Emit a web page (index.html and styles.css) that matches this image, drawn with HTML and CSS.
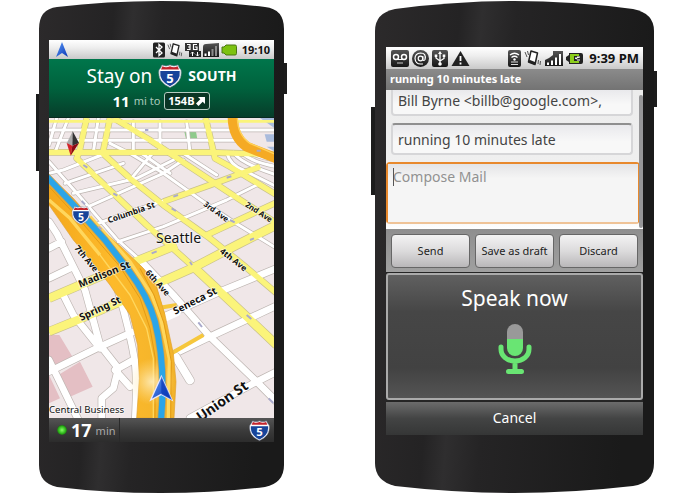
FILE: index.html
```html
<!DOCTYPE html>
<html lang="en">
<head>
<meta charset="utf-8">
<title>Navigation and voice input</title>
<link rel="stylesheet" href="styles.css">
</head>
<body>
<svg class="defs" aria-hidden="true">
  <defs>
    <linearGradient id="case" x1="0" y1="0" x2="1" y2="0.15">
      <stop offset="0" stop-color="#2c2a2b"/><stop offset="0.3" stop-color="#242324"/><stop offset="0.38" stop-color="#2f2e2f"/><stop offset="0.5" stop-color="#252425"/><stop offset="1" stop-color="#1a1a1a"/>
    </linearGradient>
    <linearGradient id="arrow" x1="0" y1="0" x2="1" y2="1">
      <stop offset="0" stop-color="#5b9bf8"/><stop offset="1" stop-color="#0a35b5"/>
    </linearGradient>
    <linearGradient id="dark" x1="0" y1="0" x2="0" y2="1">
      <stop offset="0" stop-color="#555"/><stop offset="1" stop-color="#161616"/>
    </linearGradient>
    <symbol id="shield" viewBox="0 0 24 24">
      <path d="M4 1Q8 3 12 1Q16 3 20 1Q21 4 23 6Q25 18 12 23.500Q-1 18 1 6Q3 4 4 1Z" fill="#fff" stroke="#7d86a0" stroke-width=".6"/>
      <path d="M4.500 2.300Q8 4 12 2.300Q16 4 19.500 2.300L21 5.500H3Z" fill="#c3242c"/>
      <path d="M2.300 7H21.700Q23 17 12 22.200Q1 17 2.300 7Z" fill="#17449a"/>
      <text x="12" y="18.500" text-anchor="middle" class="shield-text">5</text>
    </symbol>
    <symbol id="vibrate" viewBox="0 0 18 18">
      <path d="M7 2L13.500 4L11 15.500L4.500 13Z" fill="#fff" stroke="#222" stroke-width="1.500" stroke-linejoin="round"/>
      <path d="M5 12L11 14.500" stroke="#222" stroke-width="2.500"/>
      <path d="M1 3L3 8M3.500 2L4.500 6M14.500 11L14 15M16.500 12L16 16" stroke="#555" stroke-width="1" fill="none"/>
    </symbol>
  </defs>
</svg>

<main class="stage">
  <section class="phone phone-nav" aria-label="Navigation">
    <svg class="case" viewBox="0 0 251 492" preserveAspectRatio="none" aria-hidden="true">
      <path d="M0 93H4V170H0ZM247 62H251V93H247Z" fill="#1c1c1c"/>
      <path d="M3 28Q3 8 21 6Q70 0 125 0Q180 0 229 6Q248 8 248 28V464Q248 482 229 486Q180 492 125 492Q70 492 21 486Q3 482 3 464Z" fill="url(#case)"/>
    </svg>
    <div class="screen">
      <header class="status">
        <svg class="nav-mark" viewBox="0 0 12 15" aria-hidden="true"><path d="M6 0L12 15L6 11L0 15Z" fill="url(#arrow)"/></svg>
        <span class="spacer"></span>
        <svg width="12" height="16" viewBox="0 0 12 16" aria-hidden="true"><rect width="12" height="15" rx="1.500" y=".5" fill="#222"/><path d="M3 5L9 11L6 13.500V2.500L9 5L3 11" fill="none" stroke="#fff" stroke-width="1.300"/></svg>
        <svg width="16" height="16" aria-hidden="true"><use href="#vibrate"/></svg>
        <svg width="16" height="16" viewBox="0 0 16 16" aria-hidden="true"><rect x="0" y="1" width="14" height="8" fill="#333"/><path d="M2 2.500H5V7.500H2M3 5H5M12 2.500H8.500V7.500H12V5H10" fill="none" stroke="#fff" stroke-width="1.200"/><rect x="4" y="9" width="12" height="6" fill="#222"/><path d="M7.500 14V10M6 11.500L7.500 10L9 11.500M12.500 10V14M11 12.500L12.500 14L14 12.500" fill="none" stroke="#fff"/></svg>
        <svg width="16" height="16" viewBox="0 0 16 16" aria-hidden="true"><path d="M0 15V5Q0 2 3 2L16 1V15Z" fill="url(#dark)"/><path d="M2.500 14V11.500M6 14V9.500" stroke="#fff" stroke-width="2"/><path d="M9.500 14V7M13 14V4" stroke="#8c8c8c" stroke-width="2"/></svg>
        <svg width="16" height="12" viewBox="0 0 16 12" aria-hidden="true"><path d="M5 1H14Q15.500 1 15.500 2.500V9.500Q15.500 11 14 11H5L3 9H1V3H3Z" fill="#7cc210" stroke="#4b7713"/></svg>
        <time class="clock">19:10</time>
      </header>
      <div class="guidance">
        <p class="guidance-main">Stay on <svg width="24" height="24" role="img" aria-label="Interstate 5"><use href="#shield"/></svg> <strong>SOUTH</strong></p>
        <p class="guidance-sub"><b>11</b> mi to <span class="exit">154B<svg width="10" height="10" viewBox="0 0 10 10" aria-hidden="true"><path d="M2 1H9V8L6.700 5.700L2.500 10L0 7.500L4.300 3.300Z" fill="#fff"/></svg></span></p>
      </div>
      <svg class="map" viewBox="57 9 675 900" role="img" aria-label="Map of Seattle">
        <defs>
          <g id="streets" fill="none" stroke-linecap="round" stroke-linejoin="round">
            <path d="M57 45H732M57 76H540M57 140L150 245L260 372L330 435"/>
            <path d="M80 9L57 90M115 9L75 112M205 9L190 112M310 20V112M390 20V112M470 20L480 112M545 76H640"/>
            <path d="M57 175L100 165L215 120M105 205L280 145M130 235L320 190L430 135M175 275L400 175L460 135M205 325L300 290L400 258M265 380L400 335L590 255L690 205M300 195L370 112"/>
            <path d="M240 85L300 115L400 175L520 260L610 320L740 400M330 112L420 175M455 112L560 180"/>
            <path d="M590 112Q600 150 640 165L740 215M610 112Q630 145 740 180M635 112Q660 140 740 155M660 112Q690 130 740 135"/>
          </g>
          <g id="near-streets" fill="none" stroke-linecap="round" stroke-linejoin="round">
            <path d="M330 435L430 540L540 665L680 800L750 870"/>
            <path d="M390 610L570 530L740 460M430 718L540 665L740 572M480 909L680 800L740 770"/>
            <path d="M57 320L80 355L165 525L210 690L265 760M57 400L95 380M57 490L130 455M57 770L200 700L310 650M100 540L130 600L210 700M57 735L150 925M265 760L310 735M265 760L250 820L215 850V925M255 765L300 815M265 530Q300 650 315 740Q322 800 315 925"/>
          </g>
          <g id="avenues" fill="none" stroke-linejoin="round">
            <path d="M57 112H540L740 119M170 9L148 110L140 130L250 235L350 330L490 455"/>
            <path d="M240 9L218 115L300 190L400 270L540 370L640 450L740 535M250 9L360 75L480 155L600 235L740 325M527 9L555 130L600 155L740 240"/>
            <path d="M400 260L540 210L690 155M530 360L740 262"/>
          </g>
          <g id="near-avenues" fill="none" stroke-linejoin="round">
            <path d="M490 455L650 605L740 690M57 550L150 510L320 438L440 390M57 650L150 612L290 552M350 520L490 458L620 390L740 330"/>
          </g>
          <linearGradient id="freeway" x1="0" x2="1"><stop offset="0" stop-color="#f4a81c"/><stop offset=".5" stop-color="#fdba2b"/><stop offset="1" stop-color="#f2b32b"/></linearGradient>
          <radialGradient id="glow"><stop offset="0" stop-color="#fff3cc" stop-opacity=".8"/><stop offset="1" stop-color="#ffe090" stop-opacity="0"/></radialGradient>
        </defs>
        <rect class="land" x="57" y="9" width="675" height="900"/>
        <path class="rose" d="M57 660H88L130 730L70 765L57 740ZM85 780L150 740L188 815L110 850ZM57 780L90 850L57 865Z"/>
        <path class="park" d="M463 50H498L502 72H468Z"/>
        <path class="water" d="M690 9H732V38ZM704 58H732V80H710ZM710 95H732V108Z"/>
        <use href="#streets" class="street-edge"/>
        <use href="#near-streets" class="near-street-edge"/>
        <use href="#avenues" class="avenue-edge"/>
        <use href="#near-avenues" class="near-avenue-edge"/>
        <use href="#streets" class="street"/>
        <use href="#near-streets" class="near-street"/>
        <path class="top-avenue" d="M57 19H732"/>
        <use href="#avenues" class="avenue"/>
        <use href="#near-avenues" class="near-avenue"/>
        <path class="ramp" d="M608 5Q608 65 650 95L740 130"/>
        <path class="ramp-line" d="M622 5Q622 60 660 85L740 120"/>
        <path class="driveway-edge" d="M437 725L480 796"/>
        <path class="driveway" d="M437 725L480 796M395 612L440 592"/>
        <path class="turnoff" d="M425 715L520 660M380 580L440 570M340 470L375 520L400 600"/>
        <path class="freeway-edge" fill="url(#freeway)" d="M57 180L130 250L200 330L280 402L340 460L378 510L405 600L430 715L438 800L432 909H320L328 790L323 690L300 600L240 510L185 440L130 375L85 310L57 270Z"/>
        <path class="lane" d="M57 255L120 310L210 420M180 305L300 440L365 540L392 610L418 730L415 909"/>
        <path class="lane-thin" d="M210 420L300 540L350 640L370 730V909"/>
        <path class="lane-dark" d="M57 215L145 310L270 455L330 550L360 640L376 730L375 909M330 460L372 540L402 625L424 740L422 909"/>
        <circle cx="365" cy="800" r="70" fill="url(#glow)"/>
        <path class="route-edge" d="M50 185L145 285L225 375L295 465Q355 545 375 620Q408 750 393 915"/>
        <path class="route" d="M50 185L145 285L225 375L295 465Q355 545 375 620Q408 750 393 915"/>
        <path class="traffic" d="M160 150L172 158M250 235L262 242M430 245L444 240M590 188L604 184M425 280L438 288M600 315L614 322M365 415L380 409M480 440L486 450M660 375L672 370M505 622L516 636M650 600L664 612M716 850L730 864M345 45H355M680 107H692M155 258L165 268M205 335L214 344"/>
        <path d="M128 49L110 85L127 92Z" fill="#aaa"/><path d="M128 49L147 84L127 92Z" fill="#333"/><path d="M110 84L127 92L122 122Z" fill="#d2242a"/><path d="M147 84L127 92L122 122Z" fill="#8c0a12"/>
        <use href="#shield" x="124" y="272" width="58" height="58"/>
        <g class="label">
          <text x="236" y="325" transform="rotate(-19 236 325)" class="mid">Columbia St</text>
          <text x="519" y="271" transform="rotate(36 519 271)" class="small">3rd Ave</text>
          <text x="644" y="273" transform="rotate(33 644 273)" class="small">2nd Ave</text>
          <text x="568" y="412" transform="rotate(38 568 412)" class="mid">4th Ave</text>
          <text x="132" y="400" transform="rotate(50 132 400)" class="mid">7th Ave</text>
          <text x="345" y="474" transform="rotate(48 345 474)" class="mid">6th Ave</text>
          <text x="150" y="518" transform="rotate(-22 150 518)" class="big">Madison St</text>
          <text x="154" y="618" transform="rotate(-25 154 618)" class="big">Spring St</text>
          <text x="436" y="599" transform="rotate(-27 436 599)" class="big">Seneca St</text>
          <text x="512" y="921" transform="rotate(-35 512 921)" class="huge">Union St</text>
          <text x="378" y="383" class="city">Seattle</text>
          <text x="57" y="895" class="district">Central Business</text>
        </g>
        <path d="M394 784L426 855L394 838L362 855Z" fill="url(#arrow)" stroke="#e7e7ff" stroke-width="4"/>
        <path d="M394 784L426 855L394 838Z" fill="#0b39b8" opacity=".7"/>
      </svg>
      <footer class="eta">
        <span class="eta-time"><i class="led"></i><b>17</b> min</span>
        <svg width="21" height="21" role="img" aria-label="Interstate 5"><use href="#shield"/></svg>
      </footer>
    </div>
  </section>

  <section class="phone phone-mail" aria-label="Mail">
    <svg class="case" viewBox="0 0 286 492" preserveAspectRatio="none" aria-hidden="true">
      <path d="M0 106H5V194H0ZM282 70H286V106H282Z" fill="#1c1c1c"/>
      <path d="M4 30Q4 12 24 8Q85 0 143 0Q201 0 262 8Q283 12 283 30V462Q283 482 262 485Q201 492 143 492Q85 492 24 485Q4 480 4 462Z" fill="url(#case)"/>
    </svg>
    <form class="screen">
      <header class="status status-mail">
        <svg width="18" height="17" viewBox="0 0 18 17" aria-hidden="true"><rect width="18" height="17" rx="2" fill="url(#dark)"/><circle cx="5" cy="7" r="2.500" fill="none" stroke="#fff" stroke-width="1.500"/><circle cx="13" cy="7" r="2.500" fill="none" stroke="#fff" stroke-width="1.500"/><path d="M5 9.500H13" stroke="#fff"/><path d="M6 13H12" stroke="#ccc"/></svg>
        <svg width="17" height="17" viewBox="0 0 17 17" aria-hidden="true"><circle cx="8.500" cy="8.500" r="8.500" fill="url(#dark)"/><circle cx="8.500" cy="8.500" r="2.300" fill="none" stroke="#fff" stroke-width="1.200"/><path d="M10.800 6V9.500Q11.500 11.500 13 9.500Q14.500 3 8.500 3Q3 3.500 3 8.500Q3.500 14 8.500 14H11" fill="none" stroke="#fff" stroke-width="1.200"/></svg>
        <svg width="16" height="17" viewBox="0 0 16 17" aria-hidden="true"><rect width="16" height="17" rx="2" fill="url(#dark)"/><path d="M8 3V14M4 6V8L8 11L12 8.500V6" fill="none" stroke="#fff" stroke-width="1.300"/><path d="M8 1L10 4H6ZM2.700 4.500H5.300V7H2.700ZM10.700 4.500H13.300V7H10.700Z" fill="#fff"/><circle cx="8" cy="14" r="1.800" fill="#fff"/></svg>
        <svg width="19" height="17" viewBox="0 0 19 17" aria-hidden="true"><path d="M9.500 1L18.500 16H.5Z" fill="#222"/><path d="M9.500 6V11M9.500 12.500V14.500" stroke="#fff" stroke-width="1.800"/></svg>
        <span class="spacer"></span>
        <svg width="13" height="17" viewBox="0 0 13 17" aria-hidden="true"><rect width="13" height="17" rx="2" fill="url(#dark)"/><path d="M2 5Q6.500 1.500 11 5M3.500 7.500Q6.500 5 9.500 7.500" fill="none" stroke="#fff" stroke-width="1.300"/><circle cx="6.500" cy="9.500" r="1.200" fill="#fff"/><path d="M3 12H10M3 14.500H10" stroke="#ddd"/></svg>
        <svg width="18" height="18" aria-hidden="true"><use href="#vibrate"/></svg>
        <svg width="18" height="17" viewBox="0 0 18 17" aria-hidden="true"><path d="M0 16V10L4 8L8 5V1H18V16Z" fill="url(#dark)"/><path d="M3 15V12.500M7 15V10.500M11 15V7.500M15 15V4" stroke="#fff" stroke-width="2"/></svg>
        <svg width="17" height="13" viewBox="0 0 17 13" aria-hidden="true"><path d="M3 1H15Q17 1 17 3V10Q17 12 15 12H3V10L0 8V5L3 3Z" fill="#222"/><path d="M4 2H13V4H8V9H13V11H4Z" fill="#8bcc1b"/><path d="M9 7V5.500H11V4.500H14V5.500M11 7.500H14V8.500H11V6.500H9" fill="#fff"/></svg>
        <time class="clock">9:39 PM</time>
      </header>
      <h1 class="subject-bar">running 10 minutes late</h1>
      <div class="fields">
        <input class="field field-to" aria-label="To" value="Bill Byrne &lt;billb@google.com&gt;,">
        <input class="field field-subject" aria-label="Subject" value="running 10 minutes late">
        <div class="compose"><textarea aria-label="Message" placeholder="Compose Mail"></textarea></div>
      </div>
      <div class="actions">
        <button type="button">Send</button>
        <button type="button">Save as draft</button>
        <button type="button">Discard</button>
      </div>
      <div class="voice">
        <div class="voice-panel">
          <h2>Speak now</h2>
          <svg width="34" height="52" viewBox="0 0 34 52" aria-hidden="true">
            <path d="M9 16V9A8 8 0 0 1 25 9V16Z" fill="#999"/>
            <path d="M9 16H25V25A8 8 0 0 1 9 25Z" fill="#69e573"/>
            <path d="M3 24V26C3 33 9 38 17 38C25 38 31 33 31 26V24M17 38V48M10.500 48.500H23.500" fill="none" stroke="#69e573" stroke-width="5" stroke-linecap="round"/>
          </svg>
        </div>
        <button type="button" class="cancel">Cancel</button>
      </div>
    </form>
  </section>
</main>
</body>
</html>
```
FILE: styles.css
```css
* { box-sizing: border-box; }
body {
  margin: 0;
  background: #fff;
  font-family: "Noto Sans", "Open Sans", sans-serif;
}
p, h1, h2 { margin: 0; font-weight: 400; }
button, input, textarea { font-family: inherit; margin: 0; }
.defs { position: absolute; width: 0; height: 0; }
.stage {
  display: grid;
  grid-template-columns: 251fr 286fr;
  gap: 84px;
  max-width: 700px;
  padding: 1px 43px 1px 36px;
  align-items: start;
}
.phone { position: relative; }
.phone-nav { padding: 39px 13px 51px; }
.phone-mail { padding: 46px 14px 58px 15px; }
.case { position: absolute; inset: 0; width: 100%; height: 100%; }
.screen { position: relative; display: flex; flex-direction: column; overflow: hidden; }

.status {
  display: flex;
  align-items: center;
  gap: 2px;
  height: 19px;
  padding: 0 4px 0 7px;
  background: linear-gradient(#fff, #eee 40%, #c9c9c9);
}
.status svg { flex: none; }
.nav-mark { width: 12px; height: 15px; }
.spacer { flex: 1; }
.clock { font-size: 11px; line-height: 16px; font-weight: 700; color: #111; margin-left: 3px; white-space: nowrap; }
.status-mail { height: 22px; gap: 3px; padding: 0 4px 0 5px; }
.status-mail .clock { font-size: 13px; }

.shield-text { font: 700 13px "Noto Sans", sans-serif; fill: #fff; stroke: none; }

.guidance {
  height: 59px;
  padding-top: 4px;
  color: #fff;
  text-align: center;
  background: linear-gradient(#00764b, #00623d 50%, #073d2a);
  border-bottom: 1px solid #082a1f;
}
.guidance-main { display: flex; justify-content: center; align-items: center; gap: 6px; font-size: 19px; line-height: 26px; }
.guidance-main strong { font-size: 14px; }
.guidance-sub { display: flex; justify-content: center; align-items: center; gap: 4px; font-size: 11px; line-height: 24px; color: #a9c9bb; }
.guidance-sub b { font-size: 15px; color: #fff; }
.exit {
  display: flex;
  align-items: center;
  gap: 2px;
  padding: 0 3px;
  border: 1px solid #b5cbc1;
  border-radius: 3px;
  background: #0a3524;
  color: #fff;
  font-size: 11px;
  line-height: 16px;
  font-weight: 700;
}

.map { display: block; width: 100%; overflow: hidden; }
.land { fill: #f0e7e8; }
.rose { fill: #e4bfc4; }
.park { fill: #8fca8c; }
.water { fill: #a9bbdc; }
.street-edge { stroke: #bdb5b1; stroke-width: 13; }
.street { stroke: #fff; stroke-width: 9; }
.near-street-edge { stroke: #bdb5b1; stroke-width: 24; }
.near-street { stroke: #fff; stroke-width: 20; }
.avenue-edge { stroke: #c9c18d; stroke-width: 20; }
.avenue { stroke: #fbf47a; stroke-width: 16; }
.near-avenue-edge { stroke: #c9c18d; stroke-width: 28; }
.near-avenue { stroke: #fbf47a; stroke-width: 24; }
.top-avenue { stroke: #fbf47a; stroke-width: 8; }
.ramp, .ramp-line, .turnoff, .driveway, .driveway-edge, .lane, .lane-thin, .lane-dark, .route, .route-edge, .traffic { fill: none; stroke-linejoin: round; }
.ramp { stroke: #f5aa24; stroke-width: 30; }
.ramp-line { stroke: #ffd25a; stroke-width: 4; }
.turnoff { stroke: #f6c73c; stroke-width: 12; }
.driveway-edge { stroke: #bdb5b1; stroke-width: 28; stroke-linecap: round; }
.driveway { stroke: #fff; stroke-width: 24; stroke-linecap: round; }
.freeway-edge { stroke: #e0a030; stroke-width: 2; }
.lane { stroke: #ffd75d; stroke-width: 10; }
.lane-thin { stroke: #ffd75d; stroke-width: 4; }
.lane-dark { stroke: #e39b16; stroke-width: 3; }
.route-edge { stroke: #c9a452; stroke-width: 23; }
.route { stroke: #2aa5e8; stroke-width: 18; }
.traffic { stroke: #a9a9cc; stroke-width: 6; }
.label { font-weight: 700; fill: #111; stroke: #fff; stroke-opacity: .6; stroke-width: 5; paint-order: stroke; stroke-linejoin: round; }
.small { font-size: 23px; }
.mid { font-size: 25px; }
.big { font-size: 30px; }
.huge { font-size: 42px; }
.city { font-size: 42px; font-weight: 400; }
.district { font-size: 29px; font-weight: 400; }

.eta {
  display: flex;
  align-items: center;
  justify-content: space-between;
  height: 24px;
  padding-right: 4px;
  background: linear-gradient(#555, #3c3c3c 50%, #2c2c2c);
  color: #aaa;
}
.eta-time { display: flex; align-items: center; gap: 4px; width: 71px; height: 24px; padding-left: 8px; border-right: 1px solid #2a2a2a; font-size: 11px; white-space: nowrap; }
.eta-time b { font-size: 18px; color: #fff; }
.led { flex: none; width: 10px; height: 10px; border-radius: 50%; background: radial-gradient(#8f6, #2db51a 50%, #1f5a17 75%); }

.subject-bar {
  height: 21px;
  padding-left: 4px;
  background: linear-gradient(#8b8b8b, #737373);
  color: #fff;
  font-size: 11px;
  line-height: 20px;
  font-weight: 700;
}
.fields {
  position: relative;
  display: flex;
  flex-direction: column;
  height: 139px;
  background: linear-gradient(#ececec, #f2f2f2 90%, #fff);
}
.fields::after {
  content: "";
  position: absolute;
  right: 0;
  top: 5px;
  width: 4px;
  height: 133px;
  border-radius: 2px;
  background: #969698;
}
.field {
  margin: 0 10px 0 5px;
  padding: 0 5px;
  border: 2px solid #d6d6d8;
  border-radius: 4px;
  background: linear-gradient(#e9e9ec, #f8f8f8 60%);
  color: #444;
  font-size: 14px;
}
.field-to { height: 26px; padding-bottom: 4px; border-top: 0; border-radius: 0 0 4px 4px; }
.field-subject { height: 32px; margin-top: 7px; border-top-color: #8f8f8f; }
.compose {
  position: relative;
  height: 62px;
  margin: 7px 3px 0 0;
  border: 2px solid #e8892d;
  border-bottom-color: #efc397;
  border-radius: 4px;
}
.compose::before { content: ""; position: absolute; left: 5px; top: 4px; width: 1px; height: 18px; background: #555; }
.compose textarea {
  display: block;
  width: 100%;
  height: 100%;
  padding: 2px 5px;
  border: 0;
  resize: none;
  background: linear-gradient(#e4e4e6, #f5f5f5 25%);
  font-size: 14px;
  line-height: 22px;
}
.compose textarea::placeholder { color: #919191; opacity: 1; }

.actions {
  display: grid;
  grid-template-columns: repeat(3, 1fr);
  gap: 5px;
  height: 43px;
  padding: 5px 5px 4px;
  background: linear-gradient(#8e8e8e, #a0a0a0);
}
.actions button {
  padding: 0 0 2px;
  border: 1px solid #666;
  border-radius: 4px;
  background: linear-gradient(#f3f3f3, #dcdbdc 50%, #b9b7b9);
  color: #222;
  font-size: 11px;
  white-space: nowrap;
}
.voice { display: flex; flex-direction: column; gap: 2px; padding-top: 1px; background: #252525; }
.voice-panel {
  display: flex;
  flex-direction: column;
  align-items: center;
  height: 127px;
  padding-top: 9px;
  border: 2px solid #aaa;
  border-radius: 3px;
  background: linear-gradient(#606060, #464646 30%, #424242 75%, #545454);
}
.voice-panel h2 { color: #fff; font-size: 21px; line-height: 28px; margin-bottom: 11px; }
.cancel {
  height: 33px;
  padding: 0 0 2px;
  border: 0;
  background: linear-gradient(#6c6c6c, #434444 50%, #353636);
  color: #fff;
  font-size: 14px;
}
```
